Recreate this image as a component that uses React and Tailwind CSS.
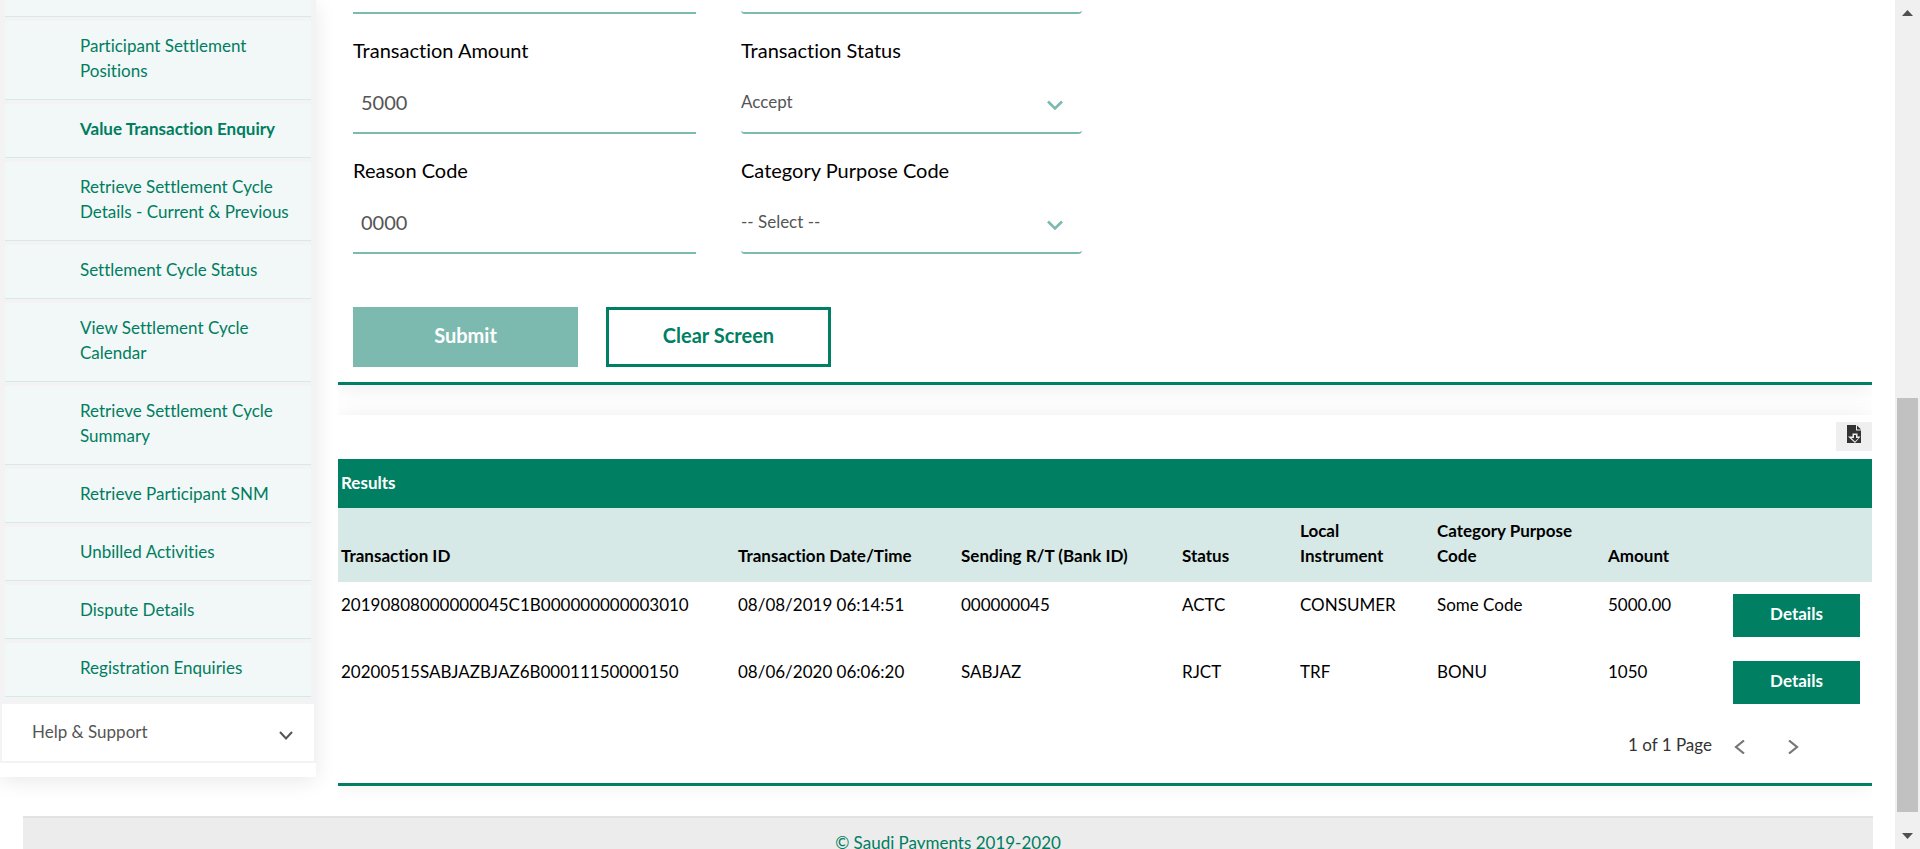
import React from "react";

const menu = [
  "Participant Settlement Positions",
  "Value Transaction Enquiry",
  "Retrieve Settlement Cycle Details - Current & Previous",
  "Settlement Cycle Status",
  "View Settlement Cycle Calendar",
  "Retrieve Settlement Cycle Summary",
  "Retrieve Participant SNM",
  "Unbilled Activities",
  "Dispute Details",
  "Registration Enquiries",
];

const columns = [
  ["Transaction ID", "w-[397px] pr-[3px]"],
  ["Transaction Date/Time", "w-[223px] pr-[3px]"],
  ["Sending R/T (Bank ID)", "w-[221px] pr-[3px]"],
  ["Status", "w-[118px] pr-[3px]"],
  ["Local Instrument", "w-[137px] pr-6"],
  ["Category Purpose Code", "w-[171px] pr-6"],
  ["Amount", "w-[125px] pr-[3px]"],
];

const rows = [
  ["20190808000000045C1B000000000003010", "08/08/2019 06:14:51", "000000045", "ACTC", "CONSUMER", "Some Code", "5000.00"],
  ["20200515SABJAZBJAZ6B00011150000150", "08/06/2020 06:06:20", "SABJAZ", "RJCT", "TRF", "BONU", "1050"],
];

function Chevron({ className, points, strokeWidth, viewBox }) {
  return (
    <svg className={className} viewBox={viewBox} fill="none" stroke="currentColor" strokeWidth={strokeWidth} aria-hidden="true">
      <polyline points={points} />
    </svg>
  );
}

function Sidebar() {
  return (
    <nav className="w-[316px] shrink-0 self-start bg-white pb-3.5 shadow-[0_4px_20px_rgba(0,0,0,0.09)]">
      <div className="bg-[#f3f3f3] px-0.5 pb-0.5">
        <ul className="mx-[3px] pb-[7px]">
          <li className="h-[17px] border-b border-[#d3eae6] bg-[#f2f7f7]" />
          {menu.map((item) => (
            <li key={item} className="border-b border-[#d3eae6] pt-1">
              <a
                href="#"
                className={
                  "block bg-[#f2f7f7] pt-3 pr-2 pb-4 pl-[75px] leading-[25px] text-[#007d61] " +
                  (item === "Value Transaction Enquiry" ? "font-bold" : "")
                }
              >
                {item}
              </a>
            </li>
          ))}
        </ul>
        <button type="button" className="flex h-[57px] w-full items-center justify-between bg-white pr-[20px] pb-0.5 pl-[30px] text-[#555]">
          <span>Help &amp; Support</span>
          <Chevron className="mt-2 h-3 w-4" viewBox="0 0 16 12" points="2,2 8,8.5 14,2" strokeWidth="2" />
        </button>
      </div>
    </nav>
  );
}

function TextField({ id, label, value }) {
  return (
    <div className="flex h-[120px] flex-col pt-[21px]">
      <label htmlFor={id} className="text-xl leading-[30px] text-black">{label}</label>
      <input
        id={id}
        defaultValue={value}
        className="mt-2.5 h-[59px] w-full border-b-2 border-[#7cbab0] bg-transparent px-2 pb-1 text-xl text-[#555] outline-none"
      />
    </div>
  );
}

function SelectField({ id, label, options }) {
  return (
    <div className="flex h-[120px] flex-col pt-[21px]">
      <label htmlFor={id} className="text-xl leading-[30px] text-black">{label}</label>
      <div className="relative mt-2.5">
        <select
          id={id}
          className="h-[59px] w-full appearance-none rounded-[4px] border-b-2 border-[#7cbab0] bg-transparent pb-1 text-[#555] outline-none"
        >
          {options.map((option) => (
            <option key={option}>{option}</option>
          ))}
        </select>
        <Chevron
          className="pointer-events-none absolute top-[25px] right-[17px] h-3 w-5 text-[#7cbab0]"
          viewBox="0 0 20 12"
          points="3,1.5 10,8.5 17,1.5"
          strokeWidth="2.6"
        />
      </div>
    </div>
  );
}

function EnquiryForm() {
  return (
    <form className="border-b-[3px] border-[#007f63] bg-white pb-[15px] pl-[15px] shadow-[0_4px_20px_rgba(0,0,0,0.07)]">
      <div className="grid grid-cols-[343px_341px] gap-x-[45px]">
        <div className="h-3.5 border-b-2 border-[#7cbab0]" />
        <div className="h-3.5 rounded-[4px] border-b-2 border-[#7cbab0]" />
        <TextField id="amount" label="Transaction Amount" value="5000" />
        <SelectField id="status" label="Transaction Status" options={["Accept", "Reject"]} />
        <TextField id="reason" label="Reason Code" value="0000" />
        <SelectField id="purpose" label="Category Purpose Code" options={["-- Select --"]} />
      </div>
      <div className="mt-[53px] flex gap-7 text-xl font-bold">
        <button type="button" className="h-[60px] w-[225px] bg-[#7cbab0] pb-1 text-white">Submit</button>
        <button type="button" className="h-[60px] w-[225px] border-[3px] border-[#007f63] bg-white pb-1 text-[#007f63]">Clear Screen</button>
      </div>
    </form>
  );
}

function ExportIcon() {
  return (
    <svg className="h-[18px] w-3.5" viewBox="0 0 14 18" aria-hidden="true">
      <path fill="#333" d="M0 0H9V5.500H14V18H0Z" />
      <path fill="#333" d="M10 0.500L14 4.500H10Z" />
      <path fill="#efefef" d="M5.500 8.500H10.500V11.500H13.500L8 18L1 11.500H5.500Z" />
      <path fill="#333" d="M7 10H9V13H11.500L8 16.500L4.500 13H7Z" />
    </svg>
  );
}

function Results() {
  return (
    <section className="mt-[30px] border-b-[3px] border-[#007f63] bg-white pt-[7px] shadow-[0_0_20px_rgba(0,0,0,0.07)]">
      <div className="flex justify-end">
        <button type="button" aria-label="Export" className="flex h-[29px] w-9 justify-center bg-[#efefef] pt-[3px]">
          <ExportIcon />
        </button>
      </div>
      <h2 className="mt-2 h-[49px] bg-[#007f63] px-[3px] leading-[47px] font-bold text-white">Results</h2>
      <table className="w-full table-fixed text-left text-black">
        <thead className="bg-[#d7e9e6]">
          <tr className="h-[74px] align-bottom">
            {columns.map(([name, width]) => (
              <th key={name} className={width + " pb-3.5 pl-[3px] leading-[25px] font-bold"}>{name}</th>
            ))}
            <th aria-label="Actions" />
          </tr>
        </thead>
        <tbody>
          {rows.map((row) => (
            <tr key={row[0]} className="h-[67px] align-top">
              {row.map((cell) => (
                <td key={cell} className="px-[3px] pt-[10px] leading-[25px]">{cell}</td>
              ))}
              <td className="pt-3 pl-[3px]">
                <button type="button" className="h-[43px] w-[127px] bg-[#007f63] pb-1 font-bold text-white">Details</button>
              </td>
            </tr>
          ))}
        </tbody>
      </table>
      <div className="flex h-[67px] items-center justify-end gap-[43px] pr-[73px] pb-2.5 text-[#333]">
        <div className="flex items-center gap-[22px]">
          <span>1 of 1 Page</span>
          <button type="button" aria-label="Previous page" className="mt-1 text-[#777]">
            <Chevron className="h-3.5 w-[11px]" viewBox="0 0 11 14" points="10,0.5 2,7 10,13.5" strokeWidth="2.2" />
          </button>
        </div>
        <button type="button" aria-label="Next page" className="mt-1 text-[#777]">
          <Chevron className="h-3.5 w-[11px]" viewBox="0 0 11 14" points="1,0.5 9,7 1,13.5" strokeWidth="2.2" />
        </button>
      </div>
    </section>
  );
}

function Scrollbar() {
  return (
    <div className="flex w-[25px] shrink-0 flex-col items-center bg-[#f0f0f0] py-2.5" aria-hidden="true">
      <svg className="h-1.5 w-[11px]" viewBox="0 0 11 6"><path fill="#505050" d="M0 6L5.500 0L11 6Z" /></svg>
      <div className="flex w-full grow flex-col items-center pt-[382px] pb-[21px]">
        <div className="w-[21px] grow bg-[#c1c1c1]" />
      </div>
      <svg className="h-1.5 w-[11px]" viewBox="0 0 11 6"><path fill="#505050" d="M0 0H11L5.500 6Z" /></svg>
    </div>
  );
}

export default function App() {
  return (
    <div className="flex h-screen overflow-hidden bg-white font-[Lato,'Noto_Sans',sans-serif] text-[17px] [font-variant-ligatures:none]">
      <div className="min-w-0 grow overflow-hidden">
        <div className="flex">
          <Sidebar />
          <main className="mr-[23px] ml-[22px] min-w-0 grow overflow-hidden pb-[15px]">
            <EnquiryForm />
            <Results />
          </main>
        </div>
        <footer className="relative bg-white pt-[15px] pr-[22px] pl-[23px]">
          <div className="border-t-2 border-[#e2e2e2] bg-[#ececec] pt-3 pb-6 text-center leading-[25px] text-[#007d61]">
            © Saudi Payments 2019-2020
          </div>
        </footer>
      </div>
      <Scrollbar />
    </div>
  );
}
